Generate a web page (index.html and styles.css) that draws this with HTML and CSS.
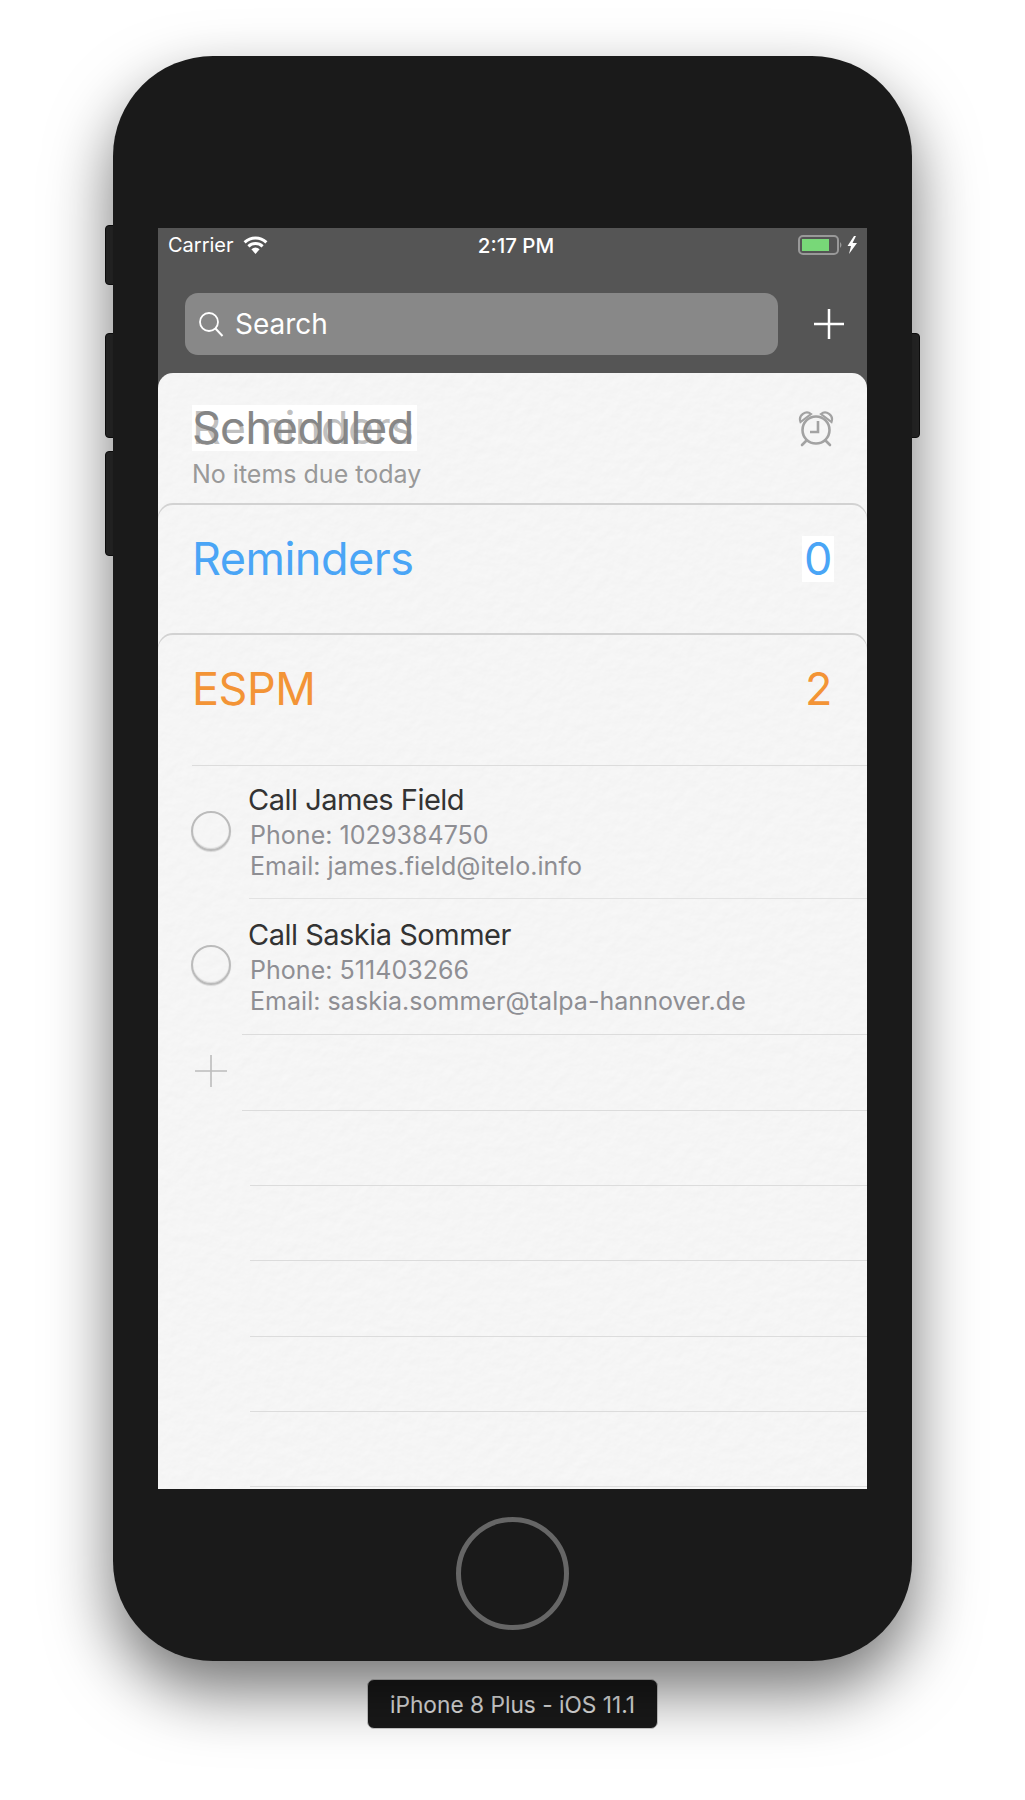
FILE: index.html
```html
<!DOCTYPE html>
<html lang="en">
<head>
  <meta charset="UTF-8" />
  <meta name="viewport" content="width=device-width, initial-scale=1.0"/>
  <title>iPhone 8 Plus - Reminders</title>
  <link rel="stylesheet" href="styles.css">
</head>
<body>
  <div class="stage">
    <div class="phone">
      <span class="side-btn side-mute"></span>
      <span class="side-btn side-up"></span>
      <span class="side-btn side-down"></span>
      <span class="side-btn side-power"></span>

      <div class="screen">
        <!-- Status bar and search -->
        <div class="header">
          <div class="status">
            <div class="status-left">
              <span>Carrier</span>
              <svg class="wifi" width="25" height="18" viewBox="0 0 25 18">
                <path d="M12.5 18 L8.4 13.2 A6.4 6.4 0 0 1 16.6 13.2 Z" fill="#fff"/>
                <path d="M5.4 10.4 A10.4 10.4 0 0 1 19.6 10.4" fill="none" stroke="#fff" stroke-width="3"/>
                <path d="M1.6 6.4 A16 16 0 0 1 23.4 6.4" fill="none" stroke="#fff" stroke-width="3"/>
              </svg>
            </div>
            <span class="status-time">2:17 PM</span>
            <div class="status-right">
              <svg width="60" height="20" viewBox="0 0 60 20">
                <rect x="1" y="1" width="39" height="18" rx="4" fill="none" stroke="#999" stroke-width="2"/>
                <rect x="4" y="4" width="27" height="12" fill="#78d878"/>
                <path d="M42 7 Q45 10 42 13 Z" fill="#999"/>
                <path d="M56 1 L49.5 11 L53 11 L51 19 L59 8 L54.5 8 L58 1 Z" fill="#fff"/>
              </svg>
            </div>
          </div>
          <div class="search-row">
            <div class="search">
              <svg width="26" height="26" viewBox="0 0 26 26">
                <circle cx="11" cy="11" r="9" fill="none" stroke="#fff" stroke-width="1.8"/>
                <path d="M17.5 17.5 L24.5 25" fill="none" stroke="#fff" stroke-width="2"/>
              </svg>
              <span>Search</span>
            </div>
            <svg class="add-list" width="30" height="30" viewBox="0 0 30 30">
              <path d="M15 0 V30 M0 15 H30" stroke="#fff" stroke-width="2.5"/>
            </svg>
          </div>
        </div>

        <!-- Paper sheet with the lists -->
        <div class="sheet">
          <svg class="paper" width="709" height="1116">
            <filter id="paper-grain" x="0" y="0" width="100%" height="100%" color-interpolation-filters="sRGB">
              <feTurbulence type="fractalNoise" baseFrequency="0.09" numOctaves="4" seed="7"/>
              <feDiffuseLighting surfaceScale="0.14" lighting-color="#fff" diffuseConstant="1">
                <feDistantLight azimuth="70" elevation="74"/>
              </feDiffuseLighting>
            </filter>
            <rect width="709" height="1116" filter="url(#paper-grain)"/>
          </svg>

          <div class="card card-first">
            <div class="card-head">
              <div>
                <div class="title title-scheduled">Scheduled<span class="ghost">Reminders</span></div>
                <div class="subtitle">No items due today</div>
              </div>
              <svg class="alarm" width="36" height="40" viewBox="0 0 36 40" fill="none" stroke="#a2a2a2" stroke-width="2.6">
                <circle cx="18" cy="21" r="13.5"/>
                <path d="M20 12 V23 H12"/>
                <path d="M2.5 13 C0 6 8 1 13 5 Z" stroke-width="2.2"/>
                <path d="M33.5 13 C36 6 28 1 23 5 Z" stroke-width="2.2"/>
                <path d="M8 32 L4 36 M28 32 L32 36" stroke-linecap="round"/>
              </svg>
            </div>
          </div>

          <div class="card">
            <div class="card-head">
              <div class="title blue">Reminders</div>
              <div class="title count blue count-lit">0</div>
            </div>
          </div>

          <div class="card card-last">
            <div class="card-head card-head-espm">
              <div class="title orange">ESPM</div>
              <div class="title count orange count-plain">2</div>
            </div>

            <div class="task">
              <div class="task-mark"><span class="circle"></span></div>
              <div class="task-body">
                <div class="task-title">Call James Field</div>
                <div class="task-note">Phone: 1029384750</div>
                <div class="task-note">Email: james.field@itelo.info</div>
              </div>
            </div>
            <div class="task task-last">
              <div class="task-mark"><span class="circle"></span></div>
              <div class="task-body">
                <div class="task-title">Call Saskia Sommer</div>
                <div class="task-note">Phone: 511403266</div>
                <div class="task-note">Email: saskia.sommer@talpa-hannover.de</div>
              </div>
            </div>

            <div class="add-row">
              <div class="add-mark">
                <svg width="32" height="32" viewBox="0 0 32 32">
                  <path d="M16 0 V32 M0 16 H32" stroke="#bcbcbc" stroke-width="1.6"/>
                </svg>
              </div>
              <div class="add-line"></div>
            </div>
            <div class="rule"></div>
            <div class="rule"></div>
            <div class="rule"></div>
            <div class="rule"></div>
            <div class="rule"></div>
          </div>
        </div>
      </div>

      <div class="home-area"><span class="home-btn"></span></div>
    </div>

    <div class="device-label">iPhone 8 Plus - iOS 11.1</div>
  </div>
</body>
</html>
```

FILE: styles.css
```css
/* Page */
body {
  margin: 0;
  background-color: #fff;
  font-family: Inter, "Liberation Sans", sans-serif;
}

.stage {
  display: flex;
  flex-direction: column;
  align-items: flex-start;
  width: 1025px;
  height: 1800px;
  padding: 56px 0 0 113px;
  box-sizing: border-box;
}

/* Phone body */
.phone {
  position: relative;
  display: flex;
  flex-direction: column;
  align-items: center;
  width: 799px;
  height: 1605px;
  padding-top: 172px;
  box-sizing: border-box;
  background-color: #1a1a1a;
  border-radius: 100px;
  box-shadow: 0 30px 65px rgba(0, 0, 0, 0.55);
}

.side-btn {
  position: absolute;
  width: 10px;
  background-color: #2d2d2d;
  border: 1px solid #111;
  z-index: -1;
}

.side-mute, .side-up, .side-down {
  left: -8px;
  border-radius: 4px 0 0 4px;
}

.side-mute { top: 169px; height: 58px; }
.side-up { top: 277px; height: 103px; }
.side-down { top: 395px; height: 103px; }

.side-power {
  right: -8px;
  top: 277px;
  height: 103px;
  border-radius: 0 4px 4px 0;
}

.screen {
  display: flex;
  flex-direction: column;
  width: 709px;
  height: 1261px;
  background-color: #555;
  overflow: hidden;
}

/* Status bar */
.header {
  height: 145px;
  color: #fff;
}

.status {
  display: grid;
  grid-template-columns: 1fr auto 1fr;
  align-items: center;
  height: 34px;
  padding: 0 9px 0 10px;
  font-size: 20px;
}

.status-left {
  display: flex;
  align-items: center;
  gap: 9px;
}

.status-time {
  margin-left: 6px;
  font-size: 20.5px;
  font-weight: 500;
}

.status-right {
  display: flex;
  justify-content: flex-end;
}

/* Search */
.search-row {
  display: flex;
  align-items: center;
  gap: 36px;
  margin-top: 31px;
  padding-left: 27px;
}

.search {
  display: flex;
  align-items: center;
  gap: 11px;
  width: 593px;
  height: 62px;
  padding-left: 13px;
  box-sizing: border-box;
  background-color: #888;
  border-radius: 13px;
  font-size: 28px;
}

/* Paper sheet */
.sheet {
  position: relative;
  flex: 1;
  border-radius: 15px 15px 0 0;
  overflow: hidden;
}

.paper {
  position: absolute;
  top: 0;
  left: 0;
}

.card {
  position: relative;
  height: 130px;
  border-radius: 15px 15px 0 0;
  box-shadow: inset 0 2px 0 #d2d2d2;
}

.card-first {
  box-shadow: none;
}

.card-last {
  height: auto;
}

.card-head {
  display: flex;
  justify-content: space-between;
  align-items: flex-start;
  padding: 33px 33px 0 34px;
}

.card-first .card-head {
  padding-top: 32px;
  padding-right: 33px;
}

.card-head-espm {
  height: 133px;
  box-sizing: border-box;
  margin-left: 34px;
  padding-left: 0;
  border-bottom: 1px solid #dcdcdc;
}

.title {
  font-size: 45px;
  line-height: 46px;
  letter-spacing: -0.5px;
}

.title-scheduled {
  position: relative;
  display: inline-block;
  padding: 0 3px 0 0;
  background-color: #fff;
  color: #888;
}

.ghost {
  position: absolute;
  left: 0;
  top: 0;
  color: rgba(130, 130, 130, 0.5);
}

.subtitle {
  margin-top: 8px;
  font-size: 25px;
  line-height: 30px;
  color: #999;
}

.alarm {
  margin-top: 4px;
}

.blue { color: #4aa5f6; }
.orange { color: #f39436; }

.count-lit {
  padding: 0 2px;
  background-color: #fff;
}

.count-plain {
  margin-right: 2px;
}

/* Task rows */
.task {
  display: flex;
}

.task-mark {
  display: flex;
  align-items: center;
  flex: none;
  width: 91px;
  padding: 0 0 4px 33px;
  box-sizing: border-box;
}

.circle {
  width: 40px;
  height: 40px;
  box-sizing: border-box;
  border: 2px solid #bbb;
  border-radius: 50%;
  box-shadow: inset 0 -1px 1px rgba(0, 0, 0, 0.12), 0 1px 1px rgba(0, 0, 0, 0.12);
}

.task-body {
  flex: 1;
  padding: 17px 0 16px;
  border-bottom: 1px solid #e2e2e2;
}

.task-last .task-body {
  padding: 19px 0 17px;
  border-bottom: none;
}

.task-title {
  margin: 0 0 3px -1px;
  font-size: 29px;
  line-height: 34px;
  letter-spacing: -0.5px;
  color: #333;
}

.task-note {
  margin-left: 1px;
  font-size: 25px;
  line-height: 31px;
  letter-spacing: 0.04px;
  color: #8e8e93;
}

/* Empty ruled lines */
.add-row {
  display: flex;
  height: 77px;
}

.add-mark {
  display: flex;
  align-items: center;
  flex: none;
  width: 84px;
  padding: 0 0 3px 37px;
  box-sizing: border-box;
}

.add-line {
  flex: 1;
  border-top: 1px solid #dcdcdc;
  border-bottom: 1px solid #dcdcdc;
}

.rule {
  height: 75.2px;
  margin-left: 92px;
  box-sizing: border-box;
  border-bottom: 1px solid #dcdcdc;
}

/* Home button */
.home-area {
  display: flex;
  align-items: center;
  justify-content: center;
  height: 172px;
  padding-bottom: 4px;
  box-sizing: border-box;
}

.home-btn {
  width: 113px;
  height: 113px;
  box-sizing: border-box;
  border: 5px solid #666;
  border-radius: 50%;
}

/* Simulator label */
.device-label {
  width: 291px;
  height: 50px;
  margin: 18px 0 0 254px;
  box-sizing: border-box;
  background-color: #1a1a1a;
  border: 1px solid #ccc;
  border-radius: 7px;
  color: #e8e8e8;
  font-size: 22.7px;
  line-height: 50px;
  text-align: center;
}
```
